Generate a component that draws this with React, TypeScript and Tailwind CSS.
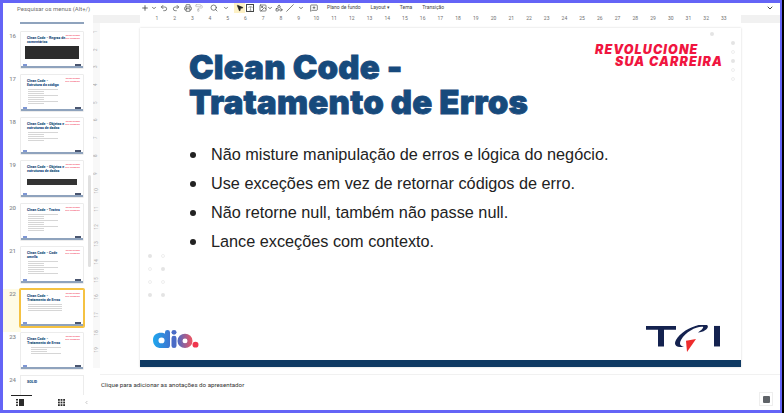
import React from 'react';
import { ChevronDown, ChevronLeft, Plus, Undo2, Redo2, Printer, PaintRoller, Search, MousePointer2, Type, Image, Shapes, Slash, MessageSquarePlus } from 'lucide-react';

type Thumb = { num: number; title: string[]; kind: 'code' | 'list' | 'wide' | 'bar' | 'center'; lines?: number };

const thumbs: Thumb[] = [
  { num: 16, title: ['Clean Code - Regras de', 'comentários'], kind: 'code' },
  { num: 17, title: ['Clean Code -', 'Estrutura do código'], kind: 'list', lines: 8 },
  { num: 18, title: ['Clean Code - Objetos e', 'estruturas de dados'], kind: 'list', lines: 5 },
  { num: 19, title: ['Clean Code - Objetos e', 'estruturas de dados'], kind: 'bar' },
  { num: 20, title: ['Clean Code - Testes'], kind: 'list', lines: 9 },
  { num: 21, title: ['Clean Code - Code', 'smells'], kind: 'list', lines: 7 },
  { num: 22, title: ['Clean Code -', 'Tratamento de Erros'], kind: 'wide', lines: 4 },
  { num: 23, title: ['Clean Code -', 'Tratamento de Erros'], kind: 'center', lines: 4 },
];

const bullets = [
  'Não misture manipulação de erros e lógica do negócio.',
  'Use exceções em vez de retornar códigos de erro.',
  'Não retorne null, também não passe null.',
  'Lance exceções com contexto.',
];

const rulerNumbers = Array.from({ length: 33 }, (_, i) => i + 1);
const sideNumbers = Array.from({ length: 19 }, (_, i) => i + 1);

function Thumbnail({ t }: { t: Thumb }) {
  const active = t.num === 22;
  return (
    <div className={`flex h-[43px] ${active ? 'bg-[#fefbe6] w-[18px] overflow-visible' : ''}`}>
      <div className="w-[17px] shrink-0 pr-[4px] pt-[1px] text-right text-[6px] leading-[8px] text-[#8a8d91] font-medium">{t.num}</div>
      <div className={`relative w-[64px] h-[38px] shrink-0 bg-white rounded-[1px] flex flex-col overflow-hidden ${active ? 'border border-[#f5c242] ring-1 ring-[#f5c242]' : 'border border-[#ececec]'}`}>
        <div className="pl-[6px] pt-[4px] text-[3.6px] leading-[4px] font-black text-[#1c4f80]">
          {t.title.map((l) => <div key={l}>{l}</div>)}
        </div>
        {t.kind === 'code' && <div className="mx-[4px] mt-[2px] h-[13px] bg-[#2c2c2c]" />}
        {t.kind === 'bar' && <div className="mx-[6px] mt-[6px] h-[6px] bg-[#333333]" />}
        {(t.kind === 'list' || t.kind === 'wide' || t.kind === 'center') && (
          <div className={`flex flex-col gap-[1px] mt-[2px] ${t.kind === 'center' ? 'pl-[10px]' : 'pl-[7px]'}`}>
            {Array.from({ length: t.lines ?? 0 }).map((_, i) => (
              <div key={i} className={`h-[1px] bg-[#d6d6d6] ${t.kind === 'wide' ? 'w-[34px]' : i % 3 === 0 ? 'w-[30px]' : 'w-[16px]'}`} />
            ))}
          </div>
        )}
        <div className="absolute right-[3px] top-[3px] text-[2.2px] leading-[2.6px] font-black italic text-[#f0153f] opacity-70 text-right">
          <div>REVOLUCIONE</div>
          <div>SUA CARREIRA</div>
        </div>
        <div className="mt-auto flex justify-between items-center px-[2px] h-[3px]">
          <div className="w-[4px] h-[2px] bg-[#7f97d4]" />
          <div className="w-[6px] h-[2px] bg-[#4a5670]" />
        </div>
        <div className="h-[2px] bg-[#8fa3bd]" />
      </div>
    </div>
  );
}

function DioLogo() {
  return (
    <svg width="46" height="18" viewBox="0 0 46 19" preserveAspectRatio="none" className="mb-[5px]">
      <defs>
        <linearGradient id="dioD" x1="0" x2="1" y1="0" y2="0">
          <stop offset="0" stopColor="#1ea7ee" />
          <stop offset="1" stopColor="#3f74cf" />
        </linearGradient>
        <linearGradient id="dioO" x1="0" x2="1" y1="0" y2="0">
          <stop offset="0" stopColor="#4a6bc6" />
          <stop offset="1" stopColor="#f2545f" />
        </linearGradient>
      </defs>
      <path d="M0 10.500C0 5.500 3.500 3 8 3c1.500 0 3 .4 4 1V2.500a2.500 2.500 0 0 1 5 0V16c0 2-1 3-3 3H8c-4.500 0-8-3-8-8.500z" fill="url(#dioD)" />
      <circle cx="8.500" cy="11" r="3" fill="white" />
      <rect x="18.500" y="6" width="5" height="13" rx="2.500" fill="#4a6bc6" />
      <circle cx="21" cy="2.500" r="2.500" fill="#4a6bc6" />
      <circle cx="32" cy="11.500" r="7.500" fill="url(#dioO)" />
      <circle cx="32" cy="11.500" r="2.500" fill="white" />
      <circle cx="42.500" cy="15.500" r="3" fill="#f0354d" />
    </svg>
  );
}

function TqiLogo() {
  return (
    <svg width="76" height="28" viewBox="0 0 76 30" preserveAspectRatio="none">
      <path d="M1 1h30v4H19v18h-6V5H1z" fill="#14224f" />
      <rect x="69" y="1" width="6" height="22" fill="#14224f" />
      <path d="M62 0c3 2-2 8-9 8 3-2 6-5 5-6-6-1-17 5-22 14-2 4-1 7 3 7-7 2-11-1-8-7C36 6 54-3 62 0z" fill="#14224f" />
      <path d="M41 17l10-2-9 14z" fill="#ee2c2c" />
    </svg>
  );
}

function FilmstripIcon() {
  return (
    <svg width="8" height="7" viewBox="0 0 8 7" fill="#2b2b2b">
      <rect x="0" y="0" width="2" height="1.500" />
      <rect x="0" y="2.700" width="2" height="1.500" />
      <rect x="0" y="5.400" width="2" height="1.500" />
      <rect x="3" y="0" width="5" height="7" />
    </svg>
  );
}

function GridIcon() {
  return (
    <svg width="7" height="7" viewBox="0 0 7 7" fill="#2b2b2b">
      {[0, 2.600, 5.200].map((y) =>
        [0, 2.600, 5.200].map((x) => <rect key={`${x}-${y}`} x={x} y={y} width="1.800" height="1.800" />),
      )}
    </svg>
  );
}

function Dot({ filled }: { filled: boolean }) {
  return <div className={`w-[4px] h-[4px] rounded-full ${filled ? 'bg-[#e4e4e4]' : 'border border-[#efefef]'}`} />;
}

const Caret = ({ className = '' }: { className?: string }) => (
  <ChevronDown size={6} strokeWidth={3} className={`text-[#444746] ${className}`} />
);

export default function App() {
  return (
    <div className="w-[784px] h-[413px] bg-black overflow-hidden font-['Roboto',sans-serif]">
      <div className="w-[782px] h-[413px] bg-[#6464f6] pt-[3px] pb-[3px] pl-[3px] pr-[2px]">
        <div className="w-[777px] h-[407px] bg-white flex flex-col overflow-hidden">
          {/* menu search + toolbar */}
          <div className="h-[12px] pb-[2px] shrink-0 flex items-center text-[#444746]">
            <div className="w-[138px] shrink-0 pl-[14px] text-[6px] text-[#6f6f6f]">Pesquisar os menus (Alt+/)</div>
            <Plus size={8} strokeWidth={2.5} />
            <Caret className="ml-[2px]" />
            <Undo2 size={8} className="ml-[3px]" />
            <Redo2 size={8} className="ml-[4px]" />
            <Printer size={8} className="ml-[4px]" />
            <PaintRoller size={8} className="ml-[3px] text-[#b5b5b5]" />
            <Search size={8} className="ml-[7px]" />
            <Caret className="ml-[5px]" />
            <div className="ml-[5px] w-[11px] h-[10px] bg-[#fdf1c5] flex items-center justify-center">
              <MousePointer2 size={8} fill="#222" className="text-[#222]" />
            </div>
            <div className="ml-[1px] w-[8px] h-[8px] border border-[#444746] flex items-center justify-center"><Type size={5} /></div>
            <Image size={8} className="ml-[5px]" />
            <Caret />
            <Shapes size={8} className="ml-[2px]" />
            <Slash size={8} className="ml-[3px]" />
            <Caret className="ml-[4px]" />
            <MessageSquarePlus size={8} className="ml-[6px]" />
            <div className="flex items-center gap-[10px] text-[5px] ml-[9px]">
              <span>Plano de fundo</span>
              <span>Layout ▾</span>
              <span>Tema</span>
              <span>Transição</span>
            </div>
            <ChevronDown size={8} strokeWidth={3} className="ml-auto mr-[6px]" />
          </div>

          <div className="flex-1 flex min-h-0">
            {/* slide list */}
            <div className="relative w-[90px] shrink-0 flex flex-col">
              <div className="flex-1 min-h-0 overflow-hidden">
                <div className="h-[9px] ml-[17px] w-[64px] flex flex-col justify-end">
                  <div className="h-[2px] bg-[#8fa3bd]" />
                </div>
                <div className="h-[7px]" />
                {thumbs.map((t) => <Thumbnail key={t.num} t={t} />)}
                <div className="flex h-[21px]">
                  <div className="w-[17px] pr-[4px] pt-[1px] text-right text-[6px] leading-[8px] text-[#8a8d91] font-medium">24</div>
                  <div className="w-[64px] h-[38px] border border-[#ececec] bg-white pl-[6px] pt-[4px] text-[3.6px] leading-[4px] font-black text-[#1c4f80]">SOLID</div>
                </div>
              </div>
              <div className="w-[86px] h-[15px] shrink-0 relative flex items-center text-[#333]">
                <div className="absolute left-[8px] top-0 w-[21px] h-[1px] bg-[#222]" />
                <div className="ml-[13px]"><FilmstripIcon /></div>
                <div className="ml-[34px]"><GridIcon /></div>
                <ChevronLeft size={7} className="ml-[19px] text-[#777]" />
              </div>
              <div className="absolute right-[2px] top-[160px] w-[3px] h-[92px] bg-[#e0e0e0] rounded-full" />
            </div>

            <div className="flex-1 min-w-0 flex flex-col">
              {/* top ruler */}
              <div className="h-[8px] shrink-0 flex items-center">
                <div className="w-[47px] h-full bg-[#f1f1f1]" />
                <div className="w-[601px] flex pl-[8px] text-[5px] text-[#6f6f6f]">
                  {rulerNumbers.map((n) => (
                    <span key={n} className="w-[17.72px] shrink-0 text-center">{n}</span>
                  ))}
                </div>
                <div className="flex-1 h-full bg-[#f1f1f1]" />
              </div>

              <div className="flex-1 min-h-0 flex">
                {/* side ruler */}
                <div className="w-[7px] shrink-0 h-[345px] flex flex-col text-[4.5px] text-[#a8a8a8] items-center bg-[#f8f8f8] overflow-hidden">
                  {sideNumbers.map((n) => (
                    <span key={n} className="h-[17.7px] shrink-0 -rotate-90 leading-[17px]">{n}</span>
                  ))}
                </div>

                <div className="flex-1 min-w-0 flex flex-col">
                  <div className="pl-[40px] pt-[5px]">
                    {/* slide */}
                    <div className="relative w-[601px] h-[339px] bg-white shadow-[0_0_2px_rgba(0,0,0,0.18)] flex flex-col">
                      <div className="pl-[49px] pt-[22px] text-[33px] leading-[35px] font-black text-[#174a7c] font-['Inter',sans-serif] tracking-[0.2px] [-webkit-text-stroke:0.8px_#174a7c]">
                        <div>Clean Code -</div>
                        <div>Tratamento de Erros</div>
                      </div>
                      <ul className="pl-[50px] pt-[20px] flex flex-col font-['Liberation_Sans',sans-serif] text-[16.25px] leading-[29px] text-[#222222]">
                        {bullets.map((b) => (
                          <li key={b} className="flex items-center gap-[15px]">
                            <span className="w-[6px] h-[6px] rounded-full bg-[#222222] shrink-0" />
                            {b}
                          </li>
                        ))}
                      </ul>
                      <div className="absolute left-[455px] top-[16px] font-['Inter',sans-serif] italic font-black text-[12.5px] tracking-[1.1px] leading-[12px] text-[#f0153f] uppercase">
                        <div>Revolucione</div>
                        <div className="pl-[20px]">Sua Carreira</div>
                      </div>
                      <div className="absolute right-[27px] top-[4px]"><Dot filled /></div>
                      <div className="absolute right-[6px] top-[13px] flex flex-col gap-[5px]">
                        {[true, false, true, false, false].map((f, i) => <Dot key={i} filled={f} />)}
                      </div>
                      <div className="absolute left-[8px] top-[226px] grid grid-cols-2 gap-[9px]">
                        {[true, false, false, true, false, false, true, true].map((f, i) => <Dot key={i} filled={f} />)}
                      </div>
                      <div className="mt-auto flex items-end justify-between pl-[13px] pr-[20px] pb-[7px]">
                        <DioLogo />
                        <TqiLogo />
                      </div>
                      <div className="h-[7px] bg-[#0f3a63] shrink-0" />
                    </div>
                  </div>
                  <div className="mt-[7px] border-t border-[#f1f1f1] flex-1 relative pl-[1px] pt-[6px] text-[6.2px] text-[#333]">
                    Clique para adicionar as anotações do apresentador
                    <div className="absolute right-[7px] bottom-[4px] w-[14px] h-[14px] border border-[#eeeeee] flex items-center justify-center">
                      <div className="w-[7px] h-[7px] rounded-[1px] bg-[#5f6368]" />
                    </div>
                  </div>
                </div>
              </div>
            </div>
          </div>
        </div>
      </div>
    </div>
  );
}
